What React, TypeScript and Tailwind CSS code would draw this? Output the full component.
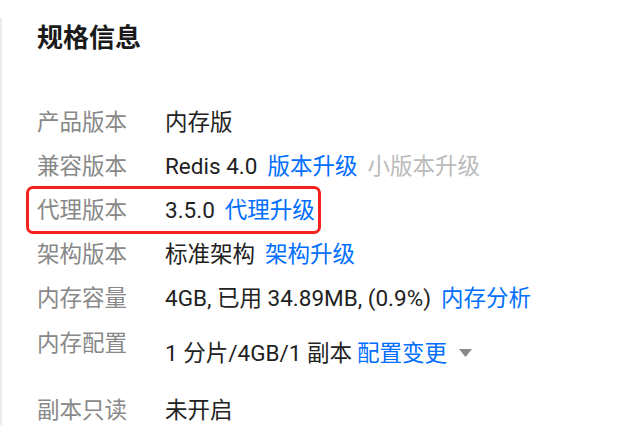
import React from 'react';

const rows: { label: string; value: string; links?: string[]; muted?: string }[] = [
  { label: '产品版本', value: '内存版' },
  { label: '兼容版本', value: 'Redis 4.0', links: ['版本升级'], muted: '小版本升级' },
  { label: '代理版本', value: '3.5.0', links: ['代理升级'] },
  { label: '架构版本', value: '标准架构', links: ['架构升级'] },
  { label: '内存容量', value: '4GB, 已用 34.89MB, (0.9%)', links: ['内存分析'] },
];

export default function App() {
  return (
    <div
      className="w-[618px] h-[445px] bg-white overflow-hidden"
      style={{ fontFamily: 'Roboto, "Noto Sans CJK SC", sans-serif' }}
    >
      <div className="mt-[18px] h-[407px] border-l-2 border-[#e8ebf0] pl-[35px]">
        {/* Title */}
        <h2 className="h-[40px] leading-[40px] text-[26px] font-bold text-[#1a1a1a]">规格信息</h2>

        <div className="mt-[43px] flex flex-col">
          {rows.map((r, i) => (
            <div key={r.label} className="relative flex h-[44px] items-center text-[22.5px]">
              {i === 2 && (
                <div className="pointer-events-none absolute left-[-11px] top-[-3px] h-[48px] w-[295px] rounded-[7px] border-[3px] border-[#f5211c]" />
              )}
              <span className="w-[128px] shrink-0 text-[#888888]">{r.label}</span>
              <div className="flex items-center gap-[10px]">
                <span className="text-[#222222]">{r.value}</span>
                {r.links?.map((l) => (
                  <a key={l} className="cursor-pointer text-[#006eff]">{l}</a>
                ))}
                {r.muted && <span className="text-[#bbbbbb]">{r.muted}</span>}
              </div>
            </div>
          ))}

          {/* 内存配置 */}
          <div className="flex h-[68px] items-start text-[22.5px]">
            <span className="w-[128px] shrink-0 leading-[44px] text-[#888888]">内存配置</span>
            <div className="flex items-center pt-[10px] leading-[44px]">
              <span className="text-[#222222]">1 分片/4GB/1 副本</span>
              <a className="ml-[5px] cursor-pointer text-[#006eff]">配置变更</a>
              <svg className="ml-[12px]" width="13" height="8" viewBox="0 0 13 8">
                <polygon points="0,0 13,0 6.5,8" fill="#888888" />
              </svg>
            </div>
          </div>

          <div className="flex h-[44px] items-center text-[22.5px]">
            <span className="w-[128px] shrink-0 text-[#888888]">副本只读</span>
            <span className="text-[#222222]">未开启</span>
          </div>
        </div>
      </div>
    </div>
  );
}
